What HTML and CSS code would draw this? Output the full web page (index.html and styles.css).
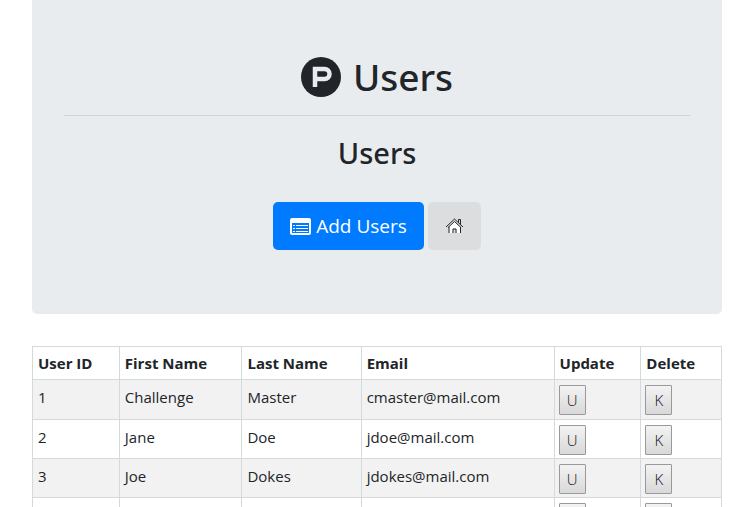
FILE: index.html
```html
<!DOCTYPE html>
<html lang="en">
<head>
<meta charset="utf-8">
<title>Users</title>
<link rel="stylesheet" href="styles.css">
</head>
<body>
<main class="container">
  <header class="jumbotron">
    <h1 class="brand">
      <svg class="brand-icon" viewBox="0 0 40 40" aria-hidden="true"><circle cx="20" cy="20" r="20" fill="#212529"/><path d="M14 30V12H23.500a4.700 4.700 0 0 1 0 10H14" fill="none" stroke="#e9ecef" stroke-width="4.500"/></svg>
      <span>Users</span>
    </h1>
    <hr class="rule">
    <h2 class="subtitle">Users</h2>
    <div class="actions">
      <a class="btn btn-primary" href="#add">
        <svg class="list-icon" viewBox="0 0 21 17" aria-hidden="true"><rect x="1" y="1" width="19" height="15" rx="1" fill="none" stroke="#fff" stroke-width="2"/><path d="M1 1h19v4H1z" fill="#fff"/><path d="M3 7.500h2M3 10.500h2M3 13.500h2M6 7.500h12M6 10.500h12M6 13.500h12" stroke="#fff"/></svg>
        <span>Add Users</span>
      </a>
      <a class="btn btn-light" href="#home" aria-label="Home">
        <svg class="home-icon" viewBox="0 0 18 16" aria-hidden="true"><path d="M4 9l5-5L14.500 9v6H11v-4.500H7V15H4z" fill="#fff"/><path d="M0.500 9L9 1L17.500 9M2.500 9.500L9 3.500L15.500 9.500M13 4.500V1.500H15V6.500M3.500 9v6M15 9v6M7.500 15v-4h3v4" fill="none" stroke="#212529"/></svg>
      </a>
    </div>
  </header>
  <table class="users">
    <colgroup><col class="c-id"><col class="c-first"><col class="c-last"><col class="c-email"><col class="c-update"><col class="c-delete"></colgroup>
    <thead>
      <tr><th>User ID</th><th>First Name</th><th>Last Name</th><th>Email</th><th>Update</th><th>Delete</th></tr>
    </thead>
    <tbody>
      <tr><td>1</td><td>Challenge</td><td>Master</td><td>cmaster@mail.com</td><td><button class="cell-btn" type="button">U</button></td><td><button class="cell-btn" type="button">K</button></td></tr>
      <tr><td>2</td><td>Jane</td><td>Doe</td><td>jdoe@mail.com</td><td><button class="cell-btn" type="button">U</button></td><td><button class="cell-btn" type="button">K</button></td></tr>
      <tr><td>3</td><td>Joe</td><td>Dokes</td><td>jdokes@mail.com</td><td><button class="cell-btn" type="button">U</button></td><td><button class="cell-btn" type="button">K</button></td></tr>
      <tr><td></td><td></td><td></td><td></td><td><button class="cell-btn" type="button" aria-label="Update"></button></td><td><button class="cell-btn" type="button" aria-label="Delete"></button></td></tr>
    </tbody>
  </table>
</main>
</body>
</html>
```
FILE: styles.css
```css
* { box-sizing: border-box; }

html { overflow: hidden; }

body {
  margin: 0;
  background: #fff;
  color: #212529;
  font-family: "Open Sans", "Noto Sans", sans-serif;
  font-size: 15px;
  line-height: 24px;
}

.container { padding: 0 15px 0 32px; }

.jumbotron {
  padding: 53px 32px 64px;
  margin-bottom: 32px;
  border-radius: 0 0 5px 5px;
  background: #e9ecef;
  text-align: center;
}

.brand {
  display: flex;
  justify-content: center;
  align-items: center;
  gap: 12px;
  margin: 0 0 14px;
  font-family: "Noto Sans", "Open Sans", sans-serif;
  font-size: 37px;
  font-weight: 500;
  line-height: 48px;
}

.brand-icon { width: 40px; height: 40px; }

.rule {
  margin: 0 0 16px;
  border: 0;
  border-top: 1px solid #cfd3d6;
}

.subtitle {
  margin: 0 0 28px;
  font-family: "Noto Sans", "Open Sans", sans-serif;
  font-size: 29px;
  font-weight: 500;
  line-height: 42px;
}

.actions {
  display: flex;
  justify-content: center;
  gap: 4px;
}

.btn {
  display: flex;
  align-items: center;
  gap: 5px;
  height: 48px;
  padding: 0 17px;
  border-radius: 5px;
  font-size: 19px;
  line-height: 30px;
  text-decoration: none;
}

.btn-primary { background: #007bff; color: #fff; }
.btn-light { background: #dcdddf; color: #212529; }
.list-icon { width: 21px; height: 17px; }
.home-icon { width: 19px; height: 16px; }

.users {
  width: 100%;
  border-collapse: collapse;
  table-layout: fixed;
}

.c-id, .c-update { width: 12.6%; }
.c-first { width: 17.8%; }
.c-last { width: 17.3%; }
.c-email { width: 28%; }

.users th,
.users td {
  padding: 4px 5px;
  border: 1px solid #d3dade;
  text-align: left;
  vertical-align: top;
}

.users th { font-weight: 700; }
.users td { padding-bottom: 3px; padding-top: 5px; }
.users td:nth-child(n+5) { padding-left: 4px; }
.users tbody tr:first-child td { padding-bottom: 4px; }
.users tbody tr:nth-child(odd) { background: #f2f2f2; }

.cell-btn {
  display: block;
  width: 27px;
  height: 30px;
  padding: 0;
  border: 1px solid #999;
  border-radius: 1px;
  background: linear-gradient(#f3f3f3, #d8d8d8);
  color: #111;
  font-family: "Open Sans", sans-serif;
  font-size: 15px;
  font-weight: 300;
}
```
